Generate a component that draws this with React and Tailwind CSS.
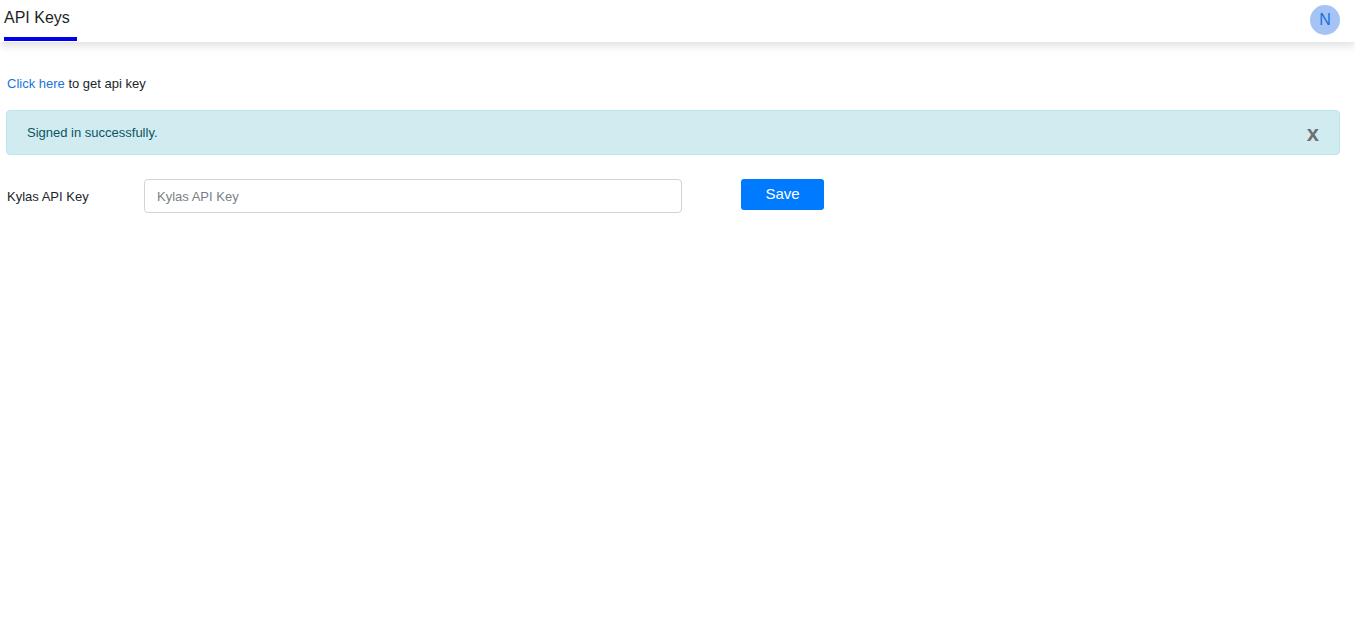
import React, { useState } from 'react';

const App = () => {
    const [apiKey, setApiKey] = useState('');
    const [showAlert, setShowAlert] = useState(true);

    return (
        <div className="min-h-screen bg-white font-['Liberation_Sans',Arial,sans-serif] text-[#212529]">
            {/* Cabeçalho */}
            <header className="h-[42px] flex items-start justify-between bg-white shadow-[0_4px_8px_rgba(0,0,0,0.12)]">
                <div className="ml-[4px] h-[42px] flex flex-col justify-between">
                    <span className="pt-[8px] pr-[8px] text-[16px] leading-[20px] text-[#1f1f1f]">API Keys</span>
                    <div className="h-[4px] mb-[1px] w-[73px] bg-[#0000ee]" />
                </div>
                <div className="mt-[5px] mr-[15px] w-[30px] h-[30px] rounded-full bg-[#a5c3f5] flex items-center justify-center text-[16px] text-[#1a6fe0]">
                    N
                </div>
            </header>

            <main className="pl-[6px] pr-[15px]">
                <p className="mt-[34px] pl-[1px] text-[13px] leading-[16px] text-[#212529]">
                    <a href="#" className="text-[#1a73d9]">Click here</a> to get api key
                </p>

                {showAlert && (
                    <div className="mt-[18px] h-[45px] flex items-start justify-between bg-[#d1ecf1] border border-[#bee5eb] rounded-[4px] pl-[20px] pr-[20px] text-[#0c5460]">
                        <span className="pt-[14px] text-[13px] leading-[16px]">Signed in successfully.</span>
                        <button
                            type="button"
                            onClick={() => setShowAlert(false)}
                            className="mt-[13px] text-[22px] leading-[20px] font-bold text-[#707070]"
                        >
                            x
                        </button>
                    </div>
                )}

                <div className="mt-[24px] flex items-start">
                    <label className="w-[138px] pl-[1px] pt-[10px] text-[13px] leading-[16px] text-[#212529]">Kylas API Key</label>
                    <input
                        type="text"
                        value={apiKey}
                        onChange={(e) => setApiKey(e.target.value)}
                        placeholder="Kylas API Key"
                        className="w-[538px] h-[34px] px-[12px] border border-[#ced4da] rounded-[4px] text-[13px] text-[#495057] placeholder-[#7a7f85] outline-none"
                    />
                    <button
                        type="button"
                        className="ml-[59px] w-[83px] h-[31px] bg-[#007bff] rounded-[3px] text-white text-[15px]"
                    >
                        Save
                    </button>
                </div>
            </main>
        </div>
    );
};

export default App;
